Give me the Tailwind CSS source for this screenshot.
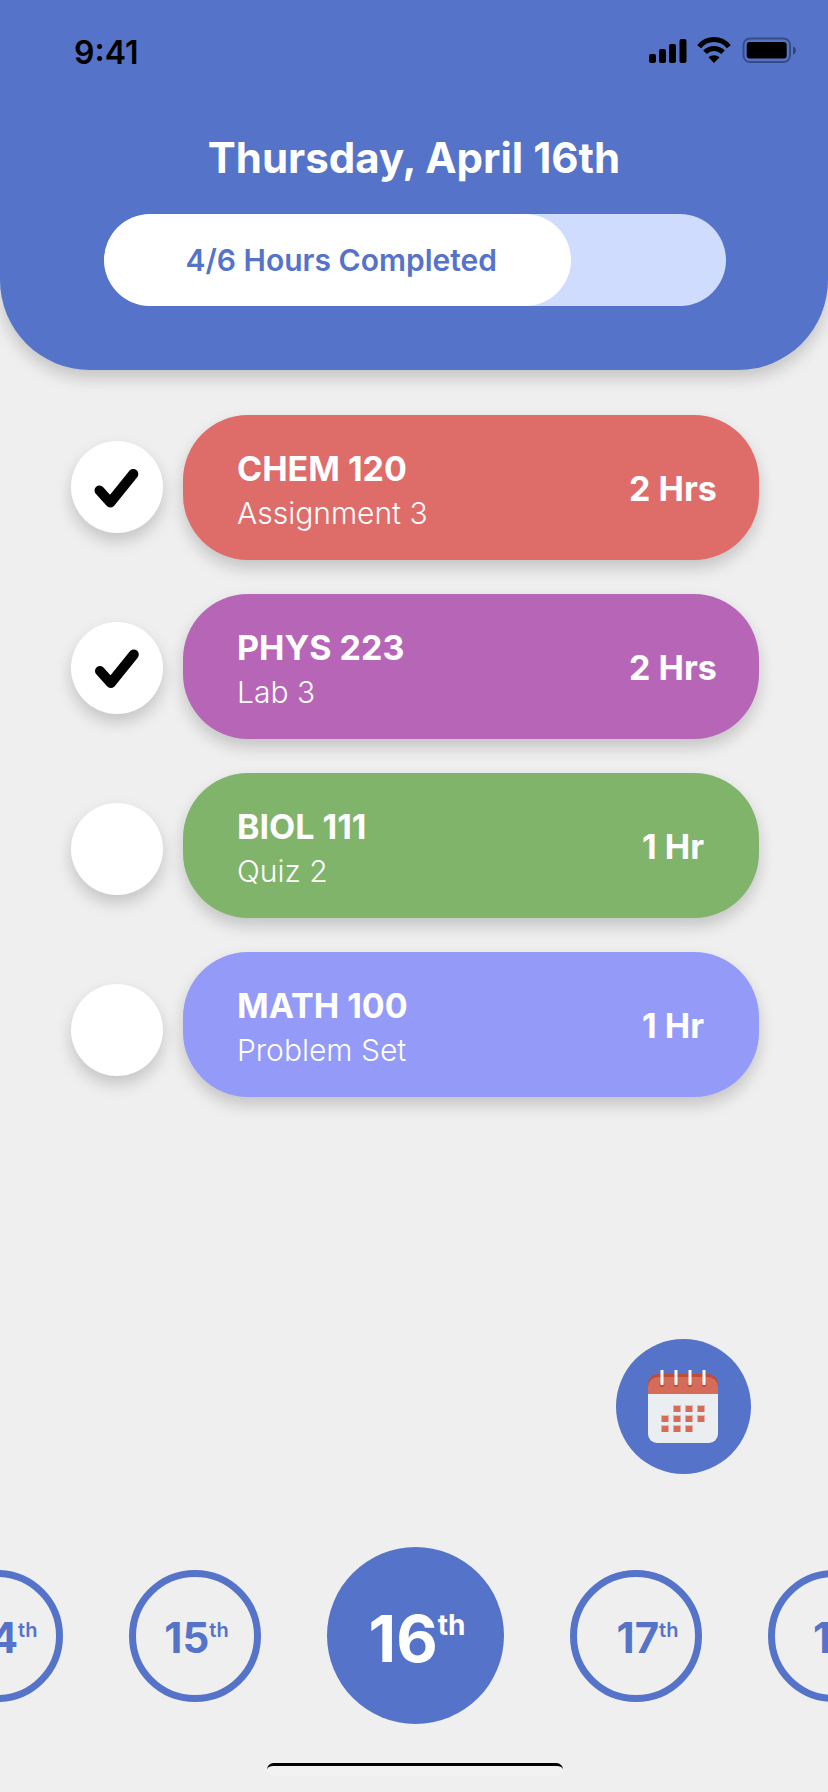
<!DOCTYPE html>
<html lang="en">
<head>
<meta charset="utf-8">
<meta name="viewport" content="width=device-width, initial-scale=1">
<title>Daily schedule</title>
<script src="https://cdn.jsdelivr.net/npm/@tailwindcss/browser@4"></script>
</head>
<body class="flex min-h-screen flex-col overflow-x-hidden bg-[#efefef] font-['Inter',sans-serif]">

  <header class="rounded-b-[90px] bg-[#5573c9] pb-16 shadow-[0_8px_16px_rgba(0,0,0,0.18)]">
    <div class="flex items-start justify-between pt-[33px] pr-[30px] pl-[74px] text-black">
      <time class="text-[32px] leading-10 font-semibold">9:41</time>
      <svg class="mt-[3px] h-[28px] w-[150px]" viewBox="0 0 150 28" role="img" aria-label="Signal, Wi-Fi and battery">
        <rect x="1" y="18" width="7" height="9" rx="2"/>
        <rect x="11" y="13" width="7" height="14" rx="2"/>
        <rect x="21" y="8" width="7" height="19" rx="2"/>
        <rect x="31.500" y="3" width="7" height="24" rx="2"/>
        <path d="M51.200 10.700a18.700 18.700 0 0 1 29.600 0M57 16.300a12.500 12.500 0 0 1 18 0" fill="none" stroke="#000" stroke-width="5"/>
        <path d="M66 27l-5.600-5.700a8.500 8.500 0 0 1 11.200 0z"/>
        <rect x="95.500" y="2.500" width="46.500" height="23.500" rx="6.500" fill="none" stroke="#000" stroke-opacity=".35" stroke-width="2"/>
        <rect x="98.700" y="6" width="40" height="16.500" rx="3"/>
        <path d="M145 10.500c4 1 4 7 0 8z" fill-opacity=".4"/>
      </svg>
    </div>
    <h1 class="mt-[60px] text-center text-[42px] leading-[50px] font-bold text-white">Thursday, April 16th</h1>
    <div class="mt-[31px] mr-[102px] ml-[104px] overflow-hidden rounded-full bg-[#cfdcfd]" role="progressbar" aria-valuemin="0" aria-valuemax="6" aria-valuenow="4" aria-label="Hours completed">
      <div class="flex h-[92px] w-3/4 items-center justify-center rounded-full bg-white pl-2 text-[30px] font-semibold text-[#5573c9]">4/6 Hours Completed</div>
    </div>
  </header>

  <main class="flex gap-5 pt-[45px] pr-[69px] pl-[71px]">
    <div class="flex flex-col gap-[89px] pt-[26px]">
      <label class="relative block size-[92px]">
        <input type="checkbox" checked aria-labelledby="chem" class="peer block size-full appearance-none rounded-full bg-white shadow-[0_8px_16px_rgba(0,0,0,0.18)]">
        <svg class="pointer-events-none absolute inset-0 hidden size-full peer-checked:block" viewBox="0 0 92 92" aria-hidden="true"><path d="M28.500 49.500L39.300 61.500L62.300 33" fill="none" stroke="#000" stroke-width="10" stroke-linecap="round" stroke-linejoin="round"/></svg>
      </label>
      <label class="relative block size-[92px]">
        <input type="checkbox" checked aria-labelledby="phys" class="peer block size-full appearance-none rounded-full bg-white shadow-[0_8px_16px_rgba(0,0,0,0.18)]">
        <svg class="pointer-events-none absolute inset-0 hidden size-full peer-checked:block" viewBox="0 0 92 92" aria-hidden="true"><path d="M29 49L39.800 61L62.800 32.500" fill="none" stroke="#000" stroke-width="10" stroke-linecap="round" stroke-linejoin="round"/></svg>
      </label>
      <label class="relative block size-[92px]">
        <input type="checkbox" aria-labelledby="biol" class="peer block size-full appearance-none rounded-full bg-white shadow-[0_8px_16px_rgba(0,0,0,0.18)]">
      </label>
      <label class="relative block size-[92px]">
        <input type="checkbox" aria-labelledby="math" class="peer block size-full appearance-none rounded-full bg-white shadow-[0_8px_16px_rgba(0,0,0,0.18)]">
      </label>
    </div>

    <ul class="flex flex-1 flex-col gap-[34px] text-white">
      <li class="flex h-[145px] items-center justify-between rounded-[65px] bg-[#de6c69] pr-[38px] pl-[54px] shadow-[0_8px_16px_rgba(0,0,0,0.18)]">
        <div id="chem" class="pt-1.5"><h2 class="text-[34px] leading-[44px] font-bold">CHEM 120</h2><p class="text-[30px] leading-[44px] font-light">Assignment 3</p></div>
        <p class="w-24 pt-0.5 text-center text-[34px] leading-[44px] font-bold whitespace-nowrap">2 Hrs</p>
      </li>
      <li class="flex h-[145px] items-center justify-between rounded-[65px] bg-[#b766b7] pr-[38px] pl-[54px] shadow-[0_8px_16px_rgba(0,0,0,0.18)]">
        <div id="phys" class="pt-1.5"><h2 class="text-[34px] leading-[44px] font-bold">PHYS 223</h2><p class="text-[30px] leading-[44px] font-light">Lab 3</p></div>
        <p class="w-24 pt-0.5 text-center text-[34px] leading-[44px] font-bold whitespace-nowrap">2 Hrs</p>
      </li>
      <li class="flex h-[145px] items-center justify-between rounded-[65px] bg-[#80b46a] pr-[38px] pl-[54px] shadow-[0_8px_16px_rgba(0,0,0,0.18)]">
        <div id="biol" class="pt-1.5"><h2 class="text-[34px] leading-[44px] font-bold">BIOL 111</h2><p class="text-[30px] leading-[44px] font-light">Quiz 2</p></div>
        <p class="w-24 pt-0.5 text-center text-[34px] leading-[44px] font-bold whitespace-nowrap">1 Hr</p>
      </li>
      <li class="flex h-[145px] items-center justify-between rounded-[65px] bg-[#949af8] pr-[38px] pl-[54px] shadow-[0_8px_16px_rgba(0,0,0,0.18)]">
        <div id="math" class="pt-1.5"><h2 class="text-[34px] leading-[44px] font-bold">MATH 100</h2><p class="text-[30px] leading-[44px] font-light">Problem Set</p></div>
        <p class="w-24 pt-0.5 text-center text-[34px] leading-[44px] font-bold whitespace-nowrap">1 Hr</p>
      </li>
    </ul>
  </main>

  <footer class="mt-auto flex flex-col pb-4">
    <button type="button" aria-label="Open calendar" class="mr-[77px] flex size-[135px] items-center justify-center self-end rounded-full bg-[#5573c9] pr-0.5">
      <svg class="h-[74px] w-[70px]" viewBox="0 0 70 74" aria-hidden="true">
        <path d="M0 24h70v40a9 9 0 0 1-9 9H9a9 9 0 0 1-9-9z" fill="#ebeef1"/>
        <path d="M0 24V14a10 10 0 0 1 10-10h50a10 10 0 0 1 10 10v10z" fill="#c14c36"/>
        <path d="M0 24V17a10 10 0 0 1 10-10h50a10 10 0 0 1 10 10v7z" fill="#d56c5a"/>
        <g fill="#c14c36"><circle cx="14" cy="14.500" r="2.500"/><circle cx="28" cy="14.500" r="2.500"/><circle cx="42" cy="14.500" r="2.500"/><circle cx="56" cy="14.500" r="2.500"/></g>
        <path d="M12.500 0h3v15h-3zM26.500 0h3v15h-3zM40.500 0h3v15h-3zM54.500 0h3v15h-3z" fill="#fff"/>
        <path d="M25.500 35h7v7h-7zM37.500 35h7v7h-7zM49.500 35h7v7h-7zM13.500 45h7v7h-7zM25.500 45h7v7h-7zM37.500 45h7v7h-7zM49.500 45h7v7h-7zM13.500 55h7v7h-7zM25.500 55h7v7h-7zM37.500 55h7v7h-7z" fill="#d56c5a"/>
        <path d="M25.500 35.500h7M37.500 35.500h7M49.500 35.500h7M13.500 45.500h7M25.500 45.500h7M37.500 45.500h7M49.500 45.500h7M13.500 55.500h7M25.500 55.500h7M37.500 55.500h7" stroke="#dcc3c2"/>
      </svg>
    </button>

    <nav aria-label="Days" class="mt-[73px] flex items-center justify-center gap-[66px] overflow-hidden pl-0.5 font-bold text-[#5573c9]">
      <a href="#14" class="flex size-[132px] shrink-0 items-center justify-center rounded-full border-[7px] border-current pt-1 pl-4"><span class="text-[42px] leading-[50px]">14</span><span class="pb-4 text-[20px] leading-6 font-semibold">th</span></a>
      <a href="#15" class="flex size-[132px] shrink-0 items-center justify-center rounded-full border-[7px] border-current pt-1 pl-1"><span class="text-[42px] leading-[50px]">15</span><span class="pb-4 text-[20px] leading-6 font-semibold">th</span></a>
      <a href="#16" aria-current="date" class="flex size-[177px] shrink-0 items-center justify-center rounded-full bg-[#5573c9] pt-1.5 pl-1 text-white"><span class="text-[64px] leading-[72px]">16</span><span class="pb-7 text-[28px] leading-9">th</span></a>
      <a href="#17" class="flex size-[132px] shrink-0 items-center justify-center rounded-full border-[7px] border-current pt-1 pl-6"><span class="text-[42px] leading-[50px]">17</span><span class="pb-4 text-[20px] leading-6 font-semibold">th</span></a>
      <a href="#18" class="flex size-[132px] shrink-0 items-center justify-center rounded-full border-[7px] border-current pt-1 pl-6"><span class="text-[42px] leading-[50px]">18</span><span class="pb-4 text-[20px] leading-6 font-semibold">th</span></a>
    </nav>

    <div class="mt-[39px] ml-0.5 h-[13px] w-[296px] self-center rounded-lg border-t-[3px] border-black bg-[#f2f2f2]"></div>
  </footer>
</body>
</html>
